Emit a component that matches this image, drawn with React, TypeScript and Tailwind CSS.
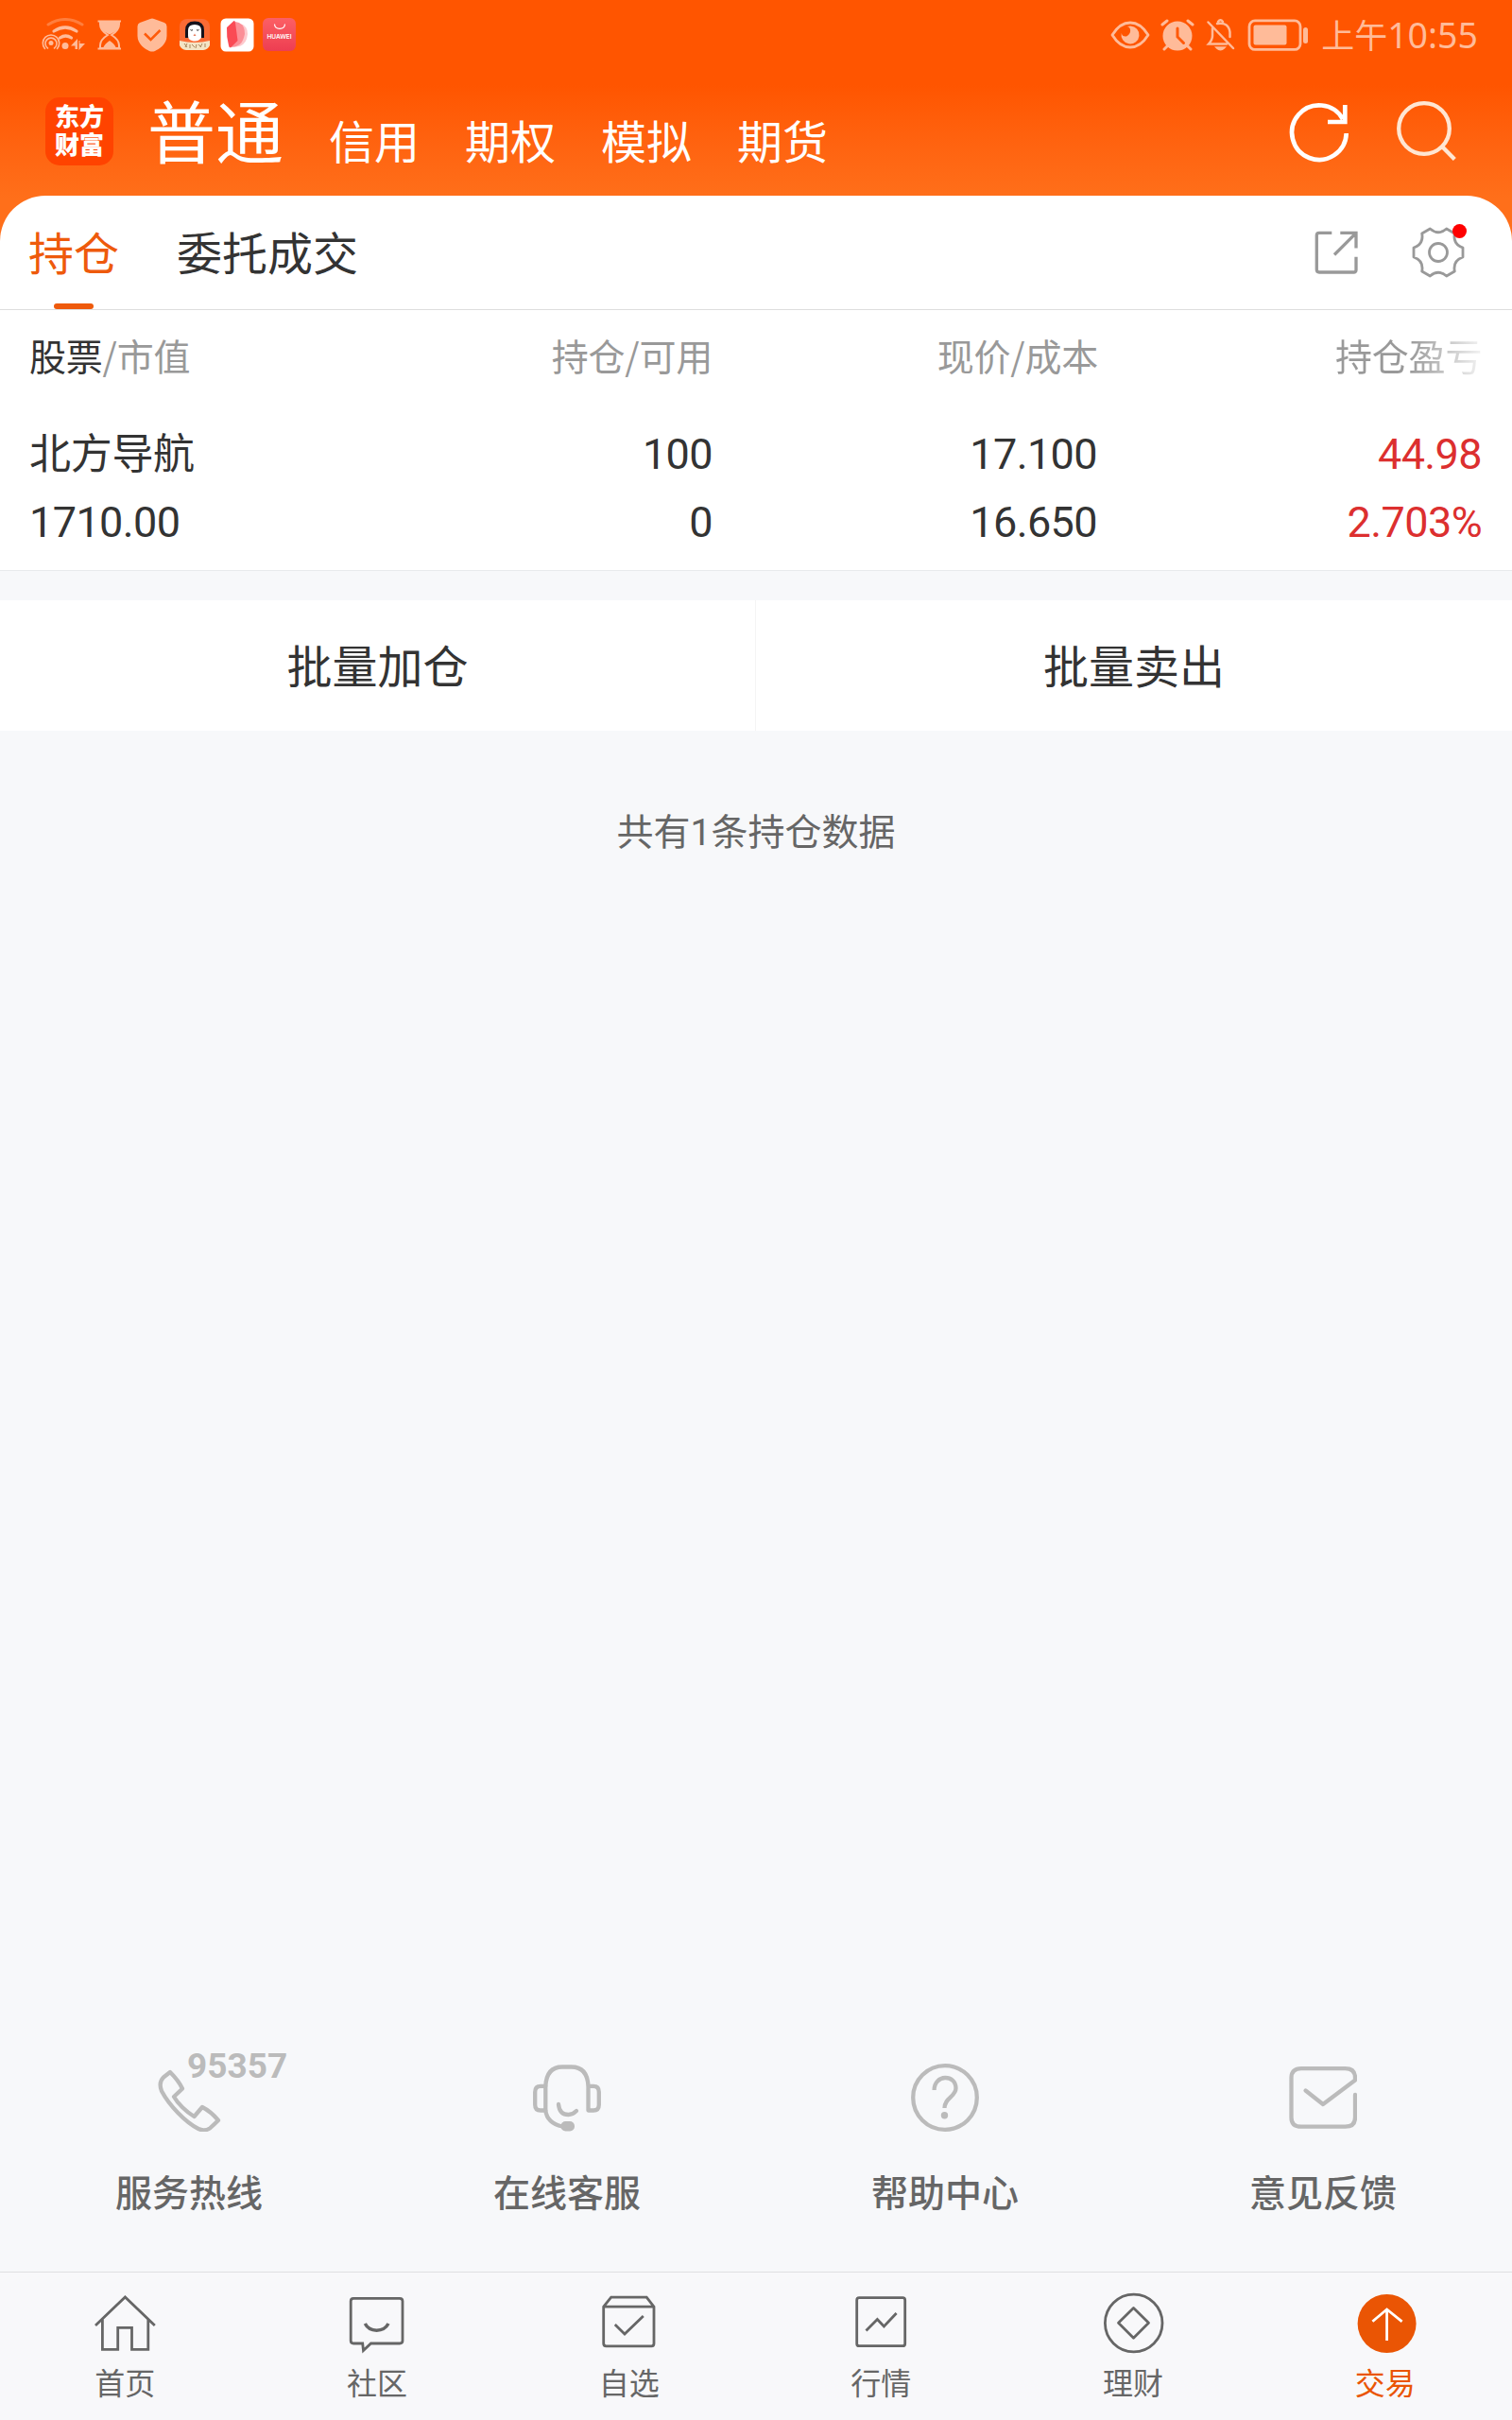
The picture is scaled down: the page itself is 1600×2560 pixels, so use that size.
import type { ReactNode } from 'react';

interface IconProps {
    children: ReactNode;
    className?: string;
    size?: number;
    stroke?: number;
}

// 72 网格的线性图标
const LineIcon = ({ children, className = '', size = 72, stroke = 3 }: IconProps) => (
    <svg
        viewBox={`0 0 ${size} ${size}`}
        width={size}
        height={size}
        fill="none"
        stroke="currentColor"
        strokeWidth={stroke}
        className={`shrink-0 ${className}`}
    >
        {children}
    </svg>
);

const markets = ['信用', '期权', '模拟', '期货'];

const services = [
    {
        label: '服务热线',
        badge: '95357',
        icon: (
            <path d="M16 9C20 13 26 20 29 26.500L20 35C24 42 33 51 41.500 56L50 46C56 49 62 54 67 60Q62 65 58 68.500Q52 72 46 69C32 62 15 44 7 29Q3.500 20 9 14.500Z" />
        ),
    },
    {
        label: '在线客服',
        icon: (
            <>
                <path d="M13.300 49.500V24.500Q14 3.500 31 3.500H40.500Q58 3.500 58.500 24.500V49.500H64Q69.800 49.500 69.800 43.500V30Q69.800 23.800 64 23.800H58.500" />
                <path d="M13.300 23.800H8Q2.200 23.800 2.200 30V43.500Q2.200 49.500 8 49.500H13.300Q15 63 31 66.500" />
                <path d="M27 43Q28 54 37.500 54Q42 54 46 50" />
                <rect x="29.500" y="61" width="14.500" height="10.500" rx="5" fill="currentColor" stroke="none" />
            </>
        ),
    },
    {
        label: '帮助中心',
        icon: (
            <>
                <circle cx="36" cy="36" r="33.800" />
                <path d="M24.600 28C24.600 11 47.500 11 47.500 26C47.500 35 35.500 36 35.500 47" strokeLinecap="butt" />
                <circle cx="35.500" cy="54.700" r="3.700" fill="currentColor" stroke="none" />
            </>
        ),
    },
    {
        label: '意见反馈',
        icon: (
            <path d="M70 33V57Q70 66.700 59.500 66.700H13Q2.500 66.700 2.500 57V15Q2.500 5.200 13 5.200H59.500Q70 5.200 70 15V17.500L36 43L17.600 28.500" />
        ),
    },
];

const navItems = [
    {
        label: '首页',
        icon: <path d="M4 38L35.400 8L66.800 38M11.400 31V63.300H27.700V40.300H42.500V63.300H59.800V31" />,
    },
    {
        label: '社区',
        icon: (
            <>
                <path d="M19.700 57H10Q7.200 57 7.200 54V12.300Q7.200 9.300 10 9.300H59Q62 9.300 62 12.300V54Q62 57 59 57H28.500L20.500 64.500Z" />
                <path d="M22.300 36C27 45.500 42 45.500 47 36" strokeWidth="3.500" />
            </>
        ),
    },
    {
        label: '自选',
        icon: (
            <path d="M7.700 18.200L15.700 8.200H53.200L61 18.200V57Q61 59.800 58.500 59.800H10.500Q7.700 59.800 7.700 57ZM7.700 18.200H61M19.800 37L30 47L49.800 28" />
        ),
    },
    {
        label: '行情',
        icon: (
            <>
                <rect x="9.700" y="8.700" width="51" height="51" rx="2.500" />
                <path d="M19.500 43.500L31.400 31.500L38.400 39L51.600 25" />
            </>
        ),
    },
    {
        label: '理财',
        icon: (
            <>
                <circle cx="35.700" cy="35.500" r="30.300" />
                <path d="M35.500 19.500L51.500 35.300L35.500 51.200L19.500 35.300Z" strokeLinejoin="round" />
            </>
        ),
    },
    {
        label: '交易',
        active: true,
        icon: (
            <>
                <circle cx="36.600" cy="36" r="31" fill="currentColor" stroke="none" />
                <path d="M36.600 54V21M21.400 33.800L36.600 21L52.600 33.800" stroke="#fff" />
            </>
        ),
    },
];

const StatusBar = () => (
    <div className="flex items-center h-[73px] pl-[44px] pr-[36px] text-[#ffbb99]">
        <svg width="46" height="36" viewBox="0 0 46 36" fill="none" stroke="currentColor" strokeLinecap="round">
            <path d="M7 7Q25 -4 43 7" strokeWidth="3" opacity=".4" />
            <path d="M13 14Q25 6 37 14" strokeWidth="3.200" />
            <path d="M19.500 21Q25.500 17 31.500 21" strokeWidth="3.200" />
            <circle cx="25" cy="29.500" r="3.500" fill="currentColor" stroke="none" />
            <circle cx="10" cy="26.500" r="2.500" fill="currentColor" stroke="none" />
            <path d="M6.500 32A6 6 0 1 1 13.500 32M3.500 32.500A8.700 8.700 0 1 1 16.500 32.500" strokeWidth="1.600" />
            <path d="M38 24V33H35.500V29.500H31L38 22ZM39.500 33V24L40.500 24V27H46L39.500 34Z" fill="currentColor" stroke="none" />
        </svg>
        <svg className="ml-[12px]" width="28" height="34" viewBox="0 0 28 34" fill="none" stroke="currentColor" strokeWidth="2">
            <path d="M1.500 2.500H26M1.500 31.500H26" />
            <path d="M4 3H24V6Q24 12 16 17Q24 22 24 28V31H4V28Q4 22 12 17Q4 12 4 6Z" />
            <path d="M4 3H24V6Q24 12 15 16H13Q4 12 4 6ZM7 31Q9 26 14 23Q19 26 21 31Z" fill="currentColor" stroke="none" />
        </svg>
        <svg className="ml-[15px]" width="32" height="36" viewBox="0 0 32 36" fill="currentColor">
            <path d="M14 1Q16 0 18 1L29 5Q31.500 6 31.500 9V19C31.500 28 23 33 19 35Q16 36 13 35C9 33 .5 28 .5 19V9Q.5 6 3 5Z" />
            <path d="M8 16.500L14.500 23L24.500 13" fill="none" stroke="#ff5a0a" strokeWidth="2.500" />
        </svg>
        <svg className="ml-[12px]" width="34" height="35" viewBox="0 0 34 35">
            <rect x="1" y="1" width="32" height="33" rx="8" fill="#fb6b35" />
            <path d="M7 21V13Q7 3.500 17 3.500Q27 3.500 27 13V21Z" fill="#15121c" />
            <path d="M10 13Q10 7 17 7Q24 7 24 13V21Q20 26 14 24Q10 23 10 19Z" fill="#fff" />
            <path d="M12.500 12.500Q14 14 15 12.500M19 12.500Q20 14 21.500 12.500" fill="none" stroke="#222" strokeWidth="1" />
            <path d="M15.500 19L17 16.500L18.500 19Z" fill="#e88164" />
            <path d="M1 24Q17 28 33 24V29Q31 33.500 26 34H8Q3 33.500 1 29Z" fill="#f4e4c5" />
            <path d="M6 27L9 31M9 27L7 31M12 28V32M14 28L17 31M19 28L18 32M21 28L24 31M25 27L23 31M28 27V31" stroke="#a8875e" strokeWidth="1" />
        </svg>
        <svg className="ml-[10px]" width="36" height="36" viewBox="0 0 36 36">
            <rect x=".5" y=".5" width="35" height="35" rx="5.500" fill="#fff" />
            <path d="M19 6Q29 7 29 17Q28 28 20 30L14 31Z" fill="#fdc9cd" />
            <path d="M16 4Q26 5 26 17Q24 28 17 30L12 31Z" fill="#fb8f97" />
            <path d="M7 10L14.500 3Q16 3 16 5L18.500 24L11 31.500Q9 31 9 29Q6.500 20 7 10Z" fill="#fa4a55" />
        </svg>
        <div className="flex flex-col items-center ml-[9px] w-[35px] h-[35px] rounded-[6px] bg-linear-to-b from-[#fc5f64] to-[#ed3d52] text-white">
            <svg width="14" height="8" viewBox="0 0 14 8" className="mt-[6px]" fill="none" stroke="currentColor" strokeWidth="1.200">
                <path d="M1.500 .5C2 7 12 7 12.500 .5" />
            </svg>
            <span className="mt-[3px] text-[6.5px] leading-[7px] font-semibold font-['Inter']">HUAWEI</span>
        </div>

        <svg className="ml-auto" width="42" height="30" viewBox="0 0 42 30" fill="none" stroke="currentColor" strokeWidth="2.800">
            <path d="M2 15Q10 2 21 2Q32 2 40 15Q32 28 21 28Q10 28 2 15Z" strokeLinejoin="round" />
            <path d="M21.500 5.500A9.500 9.500 0 1 1 11.700 13Q12.500 17 17 16.500Q22 14 21 9Q20 6 17.500 6Z" fill="currentColor" stroke="none" />
        </svg>
        <svg className="ml-[10px]" width="38" height="34" viewBox="0 0 38 34" fill="none" stroke="currentColor" strokeWidth="3" strokeLinecap="round">
            <circle cx="19" cy="18" r="15.500" fill="currentColor" stroke="none" />
            <path d="M3 6L8 2M30 2L35 6M8 29L5 32M30 29L33 32" />
            <path d="M19 10V19L25.500 25.500" stroke="#ff5a0a" />
        </svg>
        <svg className="ml-[11px]" width="32" height="34" viewBox="0 0 32 34" fill="none" stroke="currentColor" strokeWidth="2.500" strokeLinecap="round">
            <path d="M2.500 3.500L29 31M7 10V18Q7 22 3 26.500H22M12 5Q24 3 25.500 14V19M13 3Q15.500 -.5 18 3" />
            <path d="M12 30.500H19Q15.500 34 12 30.500Z" fill="currentColor" />
        </svg>
        <svg className="ml-[11px]" width="66" height="34" viewBox="0 0 66 34" fill="none" stroke="currentColor" strokeWidth="2.800">
            <rect x="3" y="1.900" width="54" height="30.500" rx="6" />
            <rect x="7.500" y="6.500" width="35" height="21" rx="2" fill="currentColor" stroke="none" />
            <rect x="60" y="9" width="5" height="17" rx="2.500" fill="currentColor" stroke="none" />
        </svg>
        <span className="ml-[13px] -mt-px text-[35px] leading-[50px] whitespace-nowrap">
            上午<span className="font-['Noto_Sans'] text-[37.5px]">10:55</span>
        </span>
    </div>
);

const Header = () => (
    <header className="h-[134px] flex items-start pl-[48px] pr-[54px] text-white">
        <div className="mt-[30px] w-[72px] h-[72px] rounded-[15px] bg-[#ff4300] pt-[7px] text-center font-black text-[26px] leading-[30px] font-['Liberation_Serif','Noto_Sans_CJK_SC',serif]">
            东方
            <br />
            财富
        </div>
        <h1 className="ml-[36px] mt-[11px] text-[72px] leading-[104px] font-normal">普通</h1>
        <nav className="ml-[48px] mt-[38px] flex gap-[48px] text-[48px] leading-[72px]">
            {markets.map((m) => (
                <span key={m}>{m}</span>
            ))}
        </nav>
        <div className="ml-auto mt-[31px] flex gap-[42px]">
            <LineIcon stroke={4.7}>
                <path d="M64.700 37A28.800 28.800 0 1 1 61 22M63.300 7V25H45" />
            </LineIcon>
            <LineIcon stroke={4.3} className="text-[#ffe6d2]">
                <circle cx="33" cy="32" r="26.800" />
                <path d="M52 51L65.300 64.500" />
            </LineIcon>
        </div>
    </header>
);

const Tabs = () => (
    <div className="flex items-center h-[121px] pl-[30px] pr-[50px] border-b border-[#dedede] text-[48px] text-[#333]">
        <div className="relative h-full flex items-center pb-[5px] text-[#ee5a0c]">
            持仓
            <span className="absolute left-[27px] bottom-0 w-[42px] h-[6px] rounded-[3px] bg-[#ee5a0c]" />
        </div>
        <div className="ml-[61px] pb-[5px]">委托成交</div>
        <LineIcon size={48} stroke={3.3} className="ml-auto text-[#999]">
            <path d="M19.300 3.300H6Q3.300 3.300 3.300 6V42Q3.300 45 6 45H42.500Q45 45 45 42.500V28.700M28.300 3.300H45V19.500M22 26.500L44.500 4" />
        </LineIcon>
        <div className="relative ml-[56px]">
            <LineIcon size={56} stroke={2.8} className="text-[#999]">
                <g transform="translate(28 28)">
                    <circle r="9.500" />
                    <path
                        d="M8.700 -25L17.300 -20Q15.200 -8.750 26 -5V5Q15.200 8.750 17.300 20L8.700 25Q0 17.500 -8.700 25L-17.300 20Q-15.200 8.750 -26 5V-5Q-15.200 -8.750 -17.300 -20L-8.700 -25Q0 -17.500 8.700 -25Z"
                        strokeLinejoin="round"
                    />
                </g>
            </LineIcon>
            <span className="absolute left-[43px] -top-[2px] w-[15px] h-[15px] rounded-full bg-[#fe0000]" />
        </div>
    </div>
);

const Holdings = () => (
    <section className="h-[276px] border-b border-[#e8eaec] text-[#333]">
        <div className="grid grid-cols-[400px_354px_408px_407px] h-[94px] items-center text-[39px] tracking-[-0.2px] text-right text-[#999]">
            <div className="pl-[31px] text-left">
                <span className="text-[#333]">股票</span>/市值
            </div>
            <div>持仓/可用</div>
            <div>现价/成本</div>
            <div className="justify-self-end w-[156px] text-left bg-linear-to-r from-[#999] from-50% to-[#f4f4f4] bg-clip-text text-transparent whitespace-nowrap">
                持仓盈亏
            </div>
        </div>
        <div className="mt-[23px] grid grid-cols-[400px_354px_407px_407px] text-[45px] tracking-[-0.6px] leading-[72px] text-right font-['Roboto','Noto_Sans_CJK_SC',sans-serif]">
            <div className="pl-[31px] text-left text-[44px] tracking-[-0.3px]">北方导航</div>
            <div>100</div>
            <div>17.100</div>
            <div className="text-[#dc2f2f]">44.98</div>
            <div className="pl-[31px] text-left">1710.00</div>
            <div>0</div>
            <div>16.650</div>
            <div className="text-[#dc2f2f]">2.703%</div>
        </div>
    </section>
);

export default function App() {
    return (
        <div className="w-[1600px] h-[2560px] overflow-hidden flex flex-col bg-[#f7f8fa] font-['Noto_Sans_CJK_SC',sans-serif]">
            <div className="bg-linear-to-b from-[#ff5500] from-[90px] to-[#ff6f1a] to-[210px]">
                <StatusBar />
                <Header />
                <main className="bg-white rounded-t-[48px]">
                    <Tabs />
                    <Holdings />
                </main>
            </div>

            <div className="mt-[31px] h-[138px] grid grid-cols-2 bg-white text-[48px] text-[#333] text-center leading-[135px]">
                <div className="border-r border-[#f4f4f4]">批量加仓</div>
                <div>批量卖出</div>
            </div>
            <p className="mt-[76px] text-center text-[39px] leading-[56px] text-[#666]">
                共有<span className="font-['Roboto']">1</span>条持仓数据
            </p>

            <div className="mt-auto grid grid-cols-4 h-[220px] text-[#bbb]">
                {services.map((s) => (
                    <div key={s.label} className="flex flex-col items-center">
                        <div className="relative">
                            <LineIcon stroke={4.3}>
                                <g strokeLinecap="round" strokeLinejoin="round">
                                    {s.icon}
                                </g>
                            </LineIcon>
                            {s.badge && (
                                <span className="absolute left-[34px] -top-[17px] text-[37px] leading-[40px] font-bold font-['Roboto']">
                                    {s.badge}
                                </span>
                            )}
                        </div>
                        <span className="mt-[34px] text-[39px] leading-[56px] font-medium text-[#666]">{s.label}</span>
                    </div>
                ))}
            </div>

            <nav className="grid grid-cols-6 h-[157px] border-t border-[#dfe0e2] bg-[#f8f8fa]">
                {navItems.map((item) => (
                    <div
                        key={item.label}
                        className={`flex flex-col items-center pt-[18px] ${item.active ? 'text-[#ea5504]' : 'text-[#666]'}`}
                    >
                        <LineIcon stroke={2.8}>{item.icon}</LineIcon>
                        <span className="mt-[2px] mr-[2px] text-[32px] leading-[46px]">{item.label}</span>
                    </div>
                ))}
            </nav>
        </div>
    );
}
